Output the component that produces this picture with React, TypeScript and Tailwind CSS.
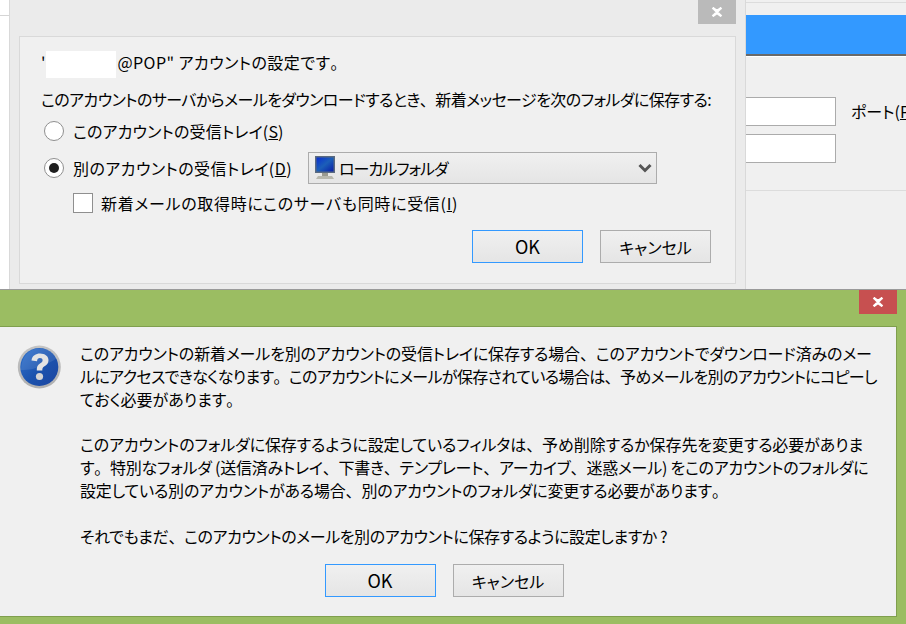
function CloseIcon() {
  return (
    <svg width="12" height="10" viewBox="0 0 12 10">
      <path d="M1.5 0.8 L6 4 L10.5 0.8 M1.5 9.2 L6 6 L10.5 9.2 M2 1 L10 9 M10 1 L2 9" stroke="#fff" strokeWidth="2.4" fill="none" />
    </svg>
  );
}

// Punctuation keeps its full width in the reference, while kana are set tightly.
function T({ children }: { children: string }) {
  return (
    <>
      {children.split(/([、。])/).map((part, i) =>
        part === '、' || part === '。' ? (
          <span key={i} className="[font-feature-settings:normal]">
            {part}
          </span>
        ) : (
          <span key={i}>{part}</span>
        ),
      )}
    </>
  );
}

function Btn({ label, primary }: { label: string; primary?: boolean }) {
  return (
    <div
      className={`w-[111px] h-[33px] flex items-center justify-center border bg-gradient-to-b from-[#f0f0f0] to-[#e5e5e5] text-black ${
        primary ? 'border-[#3399ff] text-[18px]' : 'border-[#acacac] text-[16px]'
      }`}
    >
      {label}
    </div>
  );
}

function Monitor() {
  return (
    <svg width="22" height="26" viewBox="0 0 22 26">
      <defs>
        <linearGradient id="scr" x1="0" y1="0" x2="1" y2="1">
          <stop offset="0" stopColor="#0a2fd0" />
          <stop offset="0.5" stopColor="#1c5fb8" />
          <stop offset="1" stopColor="#0a1fa8" />
        </linearGradient>
      </defs>
      <rect x="1" y="1" width="20" height="17" fill="#5a6a80" />
      <rect x="2.5" y="2.5" width="17" height="14" fill="url(#scr)" />
      <path d="M8 18h6v3H8z" fill="#9a9a90" />
      <path d="M4 21h14l2 3H2z" fill="#b8b8ae" />
    </svg>
  );
}

function QuestionIcon() {
  return (
    <svg width="45" height="45" viewBox="0 0 45 45">
      <defs>
        <linearGradient id="qb" x1="0" y1="0" x2="1" y2="1">
          <stop offset="0" stopColor="#2f73cf" />
          <stop offset="0.55" stopColor="#1b52ad" />
          <stop offset="1" stopColor="#1c45a0" />
        </linearGradient>
        <linearGradient id="qr" x1="0" y1="0" x2="0" y2="1">
          <stop offset="0" stopColor="#c4c4c4" />
          <stop offset="1" stopColor="#b0b0b0" />
        </linearGradient>
      </defs>
      <circle cx="22.3" cy="22" r="21.5" fill="url(#qr)" />
      <circle cx="22.3" cy="22" r="19" fill="url(#qb)" />
      <path d="M4 25 C14 26 30 20 40 13 C36 6 29 3.5 22 3.5 C12 3.5 4 12 4 25Z" fill="#fff" opacity="0.1" />
      <path
        d="M14.5 15.5 C15 10.5 19 8.5 23 8.5 C28 8.5 31.5 11.3 31.5 15.2 C31.5 18.3 29.7 19.8 27.5 21.3 C25.7 22.5 25.3 23.2 25.3 25.5 L19.8 25.5 C19.6 22 20.5 20.2 23 18.5 C24.8 17.3 25.6 16.6 25.6 15.3 C25.6 13.9 24.5 13 22.9 13 C21.2 13 20.2 14 20 16.2 Z"
        fill="#e4e4e4"
      />
      <circle cx="22.5" cy="31.5" r="3.6" fill="#d4d4d4" />
    </svg>
  );
}

function Radio({ checked }: { checked?: boolean }) {
  return (
    <span className="w-[20px] h-[20px] rounded-full border border-[#8f8f8f] bg-white flex items-center justify-center shrink-0">
      {checked && <span className="w-[10px] h-[10px] rounded-full bg-[#1f1f1f]" />}
    </span>
  );
}

export default function App() {
  return (
    <div className="relative w-[906px] h-[624px] overflow-hidden bg-white text-black font-['Noto_Sans_CJK_JP',sans-serif] [font-feature-settings:'palt']">
      {/* left sliver of the window behind */}
      <div className="absolute left-0 top-[15px] w-[9px] h-px bg-[#d5d5d5]" />

      {/* right window behind */}
      <div className="absolute left-[745px] top-0 w-[161px] h-[290px] bg-[#f0f0f0] border-l border-[#d9d9d9] flex flex-col overflow-hidden">
        <div className="h-[3px] border-b border-[#dcdcdc] mb-[12px] shrink-0" />
        <div className="h-[39px] bg-[#3399ff] shrink-0" />
        <div className="h-[2px] bg-[#696969] shrink-0" />
        <div className="h-px bg-white shrink-0" />
        <div className="flex items-start mt-[40px]">
          <div className="flex flex-col gap-[8px] w-[90px] shrink-0">
            <div className="h-[29px] bg-white border border-l-0 border-[#ababab]" />
            <div className="h-[29px] bg-white border border-l-0 border-[#ababab]" />
          </div>
          <div className="ml-[15px] text-[16px] leading-[29px] whitespace-nowrap">
            ポート(<span className="underline">P</span>
          </div>
        </div>
        <div className="h-px bg-[#dcdcdc] mt-[27px]" />
      </div>

      {/* account dialog */}
      <div className="absolute left-[9px] top-0 w-[736px] h-[290px] bg-[#ebebeb] border-l border-[#d9d9d9] px-[9px] pt-[36px]">
        <div className="absolute right-[9px] top-0 w-[38px] h-[24px] bg-[#bababa] flex items-center justify-center">
          <CloseIcon />
        </div>
        <div className="h-[248px] bg-[#f0f0f0] border border-[#d9d9d9] pl-[21px] pr-[24px] pt-[13px] text-[16px]">
          <div className="leading-[24px] whitespace-nowrap">
            <span>'</span>
            <span className="inline-block w-[70px] h-[27px] bg-white align-middle ml-[1px] mr-[1px]" />
            <span className="tracking-[0.45px]">
              <T>@POP" アカウントの設定です。</T>
            </span>
          </div>
          <div className="mt-[9px] leading-[24px] whitespace-nowrap tracking-[-0.57px]">
            <T>このアカウントのサーバからメールをダウンロードするとき、新着メッセージを次のフォルダに保存する:</T>
          </div>
          <div className="mt-[8px] flex items-center gap-[9px] pl-[3px] h-[24px]">
            <Radio />
            <span className="whitespace-nowrap tracking-[0.15px]">
              このアカウントの受信トレイ(<span className="underline">S</span>)
            </span>
          </div>
          <div className="mt-[9px] flex items-center h-[32px] pl-[3px]">
            <Radio checked />
            <span className="ml-[9px] w-[235px] whitespace-nowrap tracking-[0.45px]">
              別のアカウントの受信トレイ(<span className="underline">D</span>)
            </span>
            <div className="w-[349px] h-[32px] border border-[#acacac] bg-gradient-to-b from-[#f0f0f0] to-[#e5e5e5] flex items-center pl-[5px] pr-[4px]">
              <Monitor />
              <span className="ml-[3px] flex-1 tracking-[-1px]">ローカルフォルダ</span>
              <svg width="14" height="11" viewBox="0 0 14 11">
                <path d="M1.5 2 L7 7.5 L12.5 2" stroke="#555" strokeWidth="3" fill="none" />
              </svg>
            </div>
          </div>
          <div className="mt-[7px] flex items-center pl-[32px] h-[24px]">
            <span className="w-[20px] h-[20px] bg-white border border-[#8f8f8f] shrink-0" />
            <span className="ml-[8px] whitespace-nowrap tracking-[0.7px]">
              新着メールの取得時にこのサーバも同時に受信(<span className="underline">I</span>)
            </span>
          </div>
          <div className="mt-[15px] flex justify-end gap-[17px]">
            <Btn label="OK" primary />
            <Btn label="キャンセル" />
          </div>
        </div>
      </div>

      {/* warning dialog */}
      <div className="absolute left-0 top-[289px] w-[906px] h-[335px] bg-[#9bbd62] border-t border-[#9a9a9a]">
        <div className="absolute right-[9px] top-0 w-[38px] h-[24px] bg-[#c75050] flex items-center justify-center">
          <CloseIcon />
        </div>
        <div className="mt-[36px] w-[897px] h-[291px] bg-[#f0f0f0] border-t border-r border-b border-[#7f9f4e] flex flex-col">
          <div className="flex pt-[15px] pl-[17px]">
            <div className="w-[63px] shrink-0 mt-[3px]">
              <QuestionIcon />
            </div>
            <div className="text-[16px] leading-[23px] whitespace-nowrap">
              <div className="tracking-[-0.15px]"><T>このアカウントの新着メールを別のアカウントの受信トレイに保存する場合、このアカウントでダウンロード済みのメー</T></div>
              <div className="tracking-[-0.63px]"><T>ルにアクセスできなくなります。このアカウントにメールが保存されている場合は、予めメールを別のアカウントにコピーし</T></div>
              <div><T>ておく必要があります。</T></div>
              <div className="h-[22px]" />
              <div className="tracking-[-0.1px]"><T>このアカウントのフォルダに保存するように設定しているフィルタは、予め削除するか保存先を変更する必要がありま</T></div>
              <div className="tracking-[-0.23px]"><T>す。特別なフォルダ (送信済みトレイ、下書き、テンプレート、アーカイブ、迷惑メール) をこのアカウントのフォルダに</T></div>
              <div className="tracking-[-0.18px]"><T>設定している別のアカウントがある場合、別のアカウントのフォルダに変更する必要があります。</T></div>
              <div className="h-[23px]" />
              <div className="tracking-[-0.4px]"><T>それでもまだ、このアカウントのメールを別のアカウントに保存するように設定しますか ?</T></div>
            </div>
          </div>
          <div className="mt-[16px] flex justify-center gap-[17px] pr-[8px]">
            <Btn label="OK" primary />
            <Btn label="キャンセル" />
          </div>
        </div>
      </div>
    </div>
  );
}
